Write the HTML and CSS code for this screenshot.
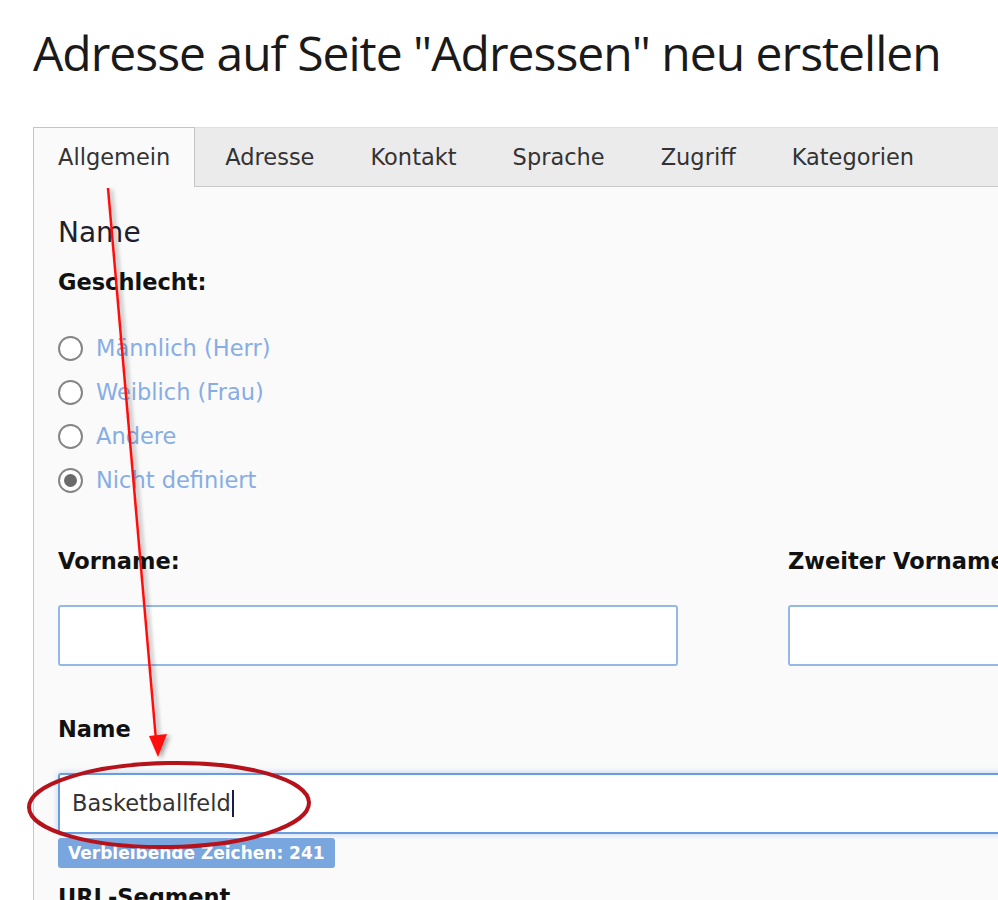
FILE: index.html
```html
<!DOCTYPE html>
<html lang="de">
<head>
<meta charset="utf-8">
<title>Adresse neu erstellen</title>
<link rel="stylesheet" href="styles.css">
</head>
<body>
<div class="page">
  <h1 class="title">Adresse auf Seite "Adressen" neu erstellen</h1>
  <div class="tabs">
    <ul class="tab-list">
      <li class="tab active">Allgemein</li>
      <li class="tab">Adresse</li>
      <li class="tab">Kontakt</li>
      <li class="tab">Sprache</li>
      <li class="tab">Zugriff</li>
      <li class="tab">Kategorien</li>
    </ul>
    <div class="panel">
      <h2 class="section-title">Name</h2>
      <div class="label">Geschlecht:</div>
      <div class="radios">
        <div class="radio-row"><span class="radio"></span><span class="radio-label">Männlich (Herr)</span></div>
        <div class="radio-row"><span class="radio"></span><span class="radio-label">Weiblich (Frau)</span></div>
        <div class="radio-row"><span class="radio"></span><span class="radio-label">Andere</span></div>
        <div class="radio-row"><span class="radio checked"></span><span class="radio-label">Nicht definiert</span></div>
      </div>
      <div class="two-cols">
        <div class="col">
          <div class="label">Vorname:</div>
          <div class="field"></div>
        </div>
        <div class="col">
          <div class="label">Zweiter Vorname:</div>
          <div class="field"></div>
        </div>
      </div>
      <div class="label name-label">Name</div>
      <div class="field focused">Basketballfeld<span class="caret"></span></div>
      <div class="badge">Verbleibende Zeichen: 241</div>
      <div class="label url-label">URL-Segment</div>
    </div>
  </div>
  <svg class="annotation" width="998" height="900" viewBox="0 0 998 900">
    <defs>
      <filter id="shadow" x="-50%" y="-10%" width="200%" height="120%">
        <feDropShadow dx="3" dy="2" stdDeviation="2" flood-color="#000" flood-opacity="0.35"/>
      </filter>
    </defs>
    <g filter="url(#shadow)">
      <line x1="108" y1="188" x2="156" y2="740" stroke="#ff1010" stroke-width="2.5"/>
      <polygon points="149,736 167,734 158,757" fill="#ff1010"/>
    </g>
    <ellipse cx="169" cy="805" rx="140" ry="42" fill="none" stroke="#b5121b" stroke-width="4" transform="rotate(-1 169 805)"/>
  </svg>
</div>
</body>
</html>
```

FILE: styles.css
```css
html, body {
  margin: 0;
  padding: 0;
  background: #ffffff;
  overflow: hidden;
}

.page {
  position: relative;
  width: 1500px;
  height: 900px;
  padding-left: 33px;
  font-family: "DejaVu Sans", Verdana, sans-serif;
  color: #222;
}

.title {
  margin: 0;
  padding-top: 23px;
  height: 127px;
  box-sizing: border-box;
  font-family: "Open Sans", "Noto Sans", sans-serif;
  font-weight: 400;
  font-size: 48px;
  letter-spacing: -1px;
  line-height: 60px;
  color: #1a1a1a;
}

.tabs {
  width: 1400px;
}

.tab-list {
  list-style: none;
  margin: 0;
  padding: 0;
  display: flex;
  gap: 4px;
  height: 60px;
  box-sizing: border-box;
  background: #ebebeb;
  border-top: 1px solid #e0e0e0;
  border-bottom: 1px solid #c8c8c8;
}

.tab {
  padding: 0 25px;
  border: 1px solid transparent;
  border-bottom: none;
  font-size: 22.5px;
  line-height: 57px;
  color: #333;
}

.tab.active {
  padding: 0 24px;
  background: #fafafa;
  border-color: #c4c4c4;
  margin-top: -1px;
  margin-bottom: -1px;
  line-height: 59px;
}

.panel {
  background: #fafafa;
  border-left: 1px solid #c8c8c8;
  padding: 29px 24px 40px 24px;
  height: 800px;
}

.section-title {
  margin: 0 0 18px 0;
  font-weight: 400;
  font-size: 28px;
  line-height: 34px;
  color: #1f1f2e;
}

.label {
  font-weight: 700;
  font-size: 22.5px;
  line-height: 28px;
  color: #111;
}

.radios {
  margin-top: 30px;
  display: flex;
  flex-direction: column;
}

.radio-row {
  height: 44px;
  display: flex;
  align-items: center;
  gap: 13px;
}

.radio {
  width: 25px;
  height: 25px;
  box-sizing: border-box;
  border: 2px solid #858585;
  border-radius: 50%;
  background: #fff;
  display: flex;
  align-items: center;
  justify-content: center;
  flex: none;
}

.radio.checked::after {
  content: "";
  width: 13px;
  height: 13px;
  border-radius: 50%;
  background: #6a6a6a;
}

.radio-label {
  font-size: 22.5px;
  color: #86ade4;
}

.two-cols {
  margin-top: 45px;
  display: grid;
  grid-template-columns: 620px 620px;
  column-gap: 110px;
}

.field {
  margin-top: 30px;
  height: 61px;
  box-sizing: border-box;
  border: 2px solid #94b9e6;
  border-radius: 3px;
  background: #fff;
  padding: 0 12px;
  font-size: 22.5px;
  line-height: 57px;
  color: #333;
  display: flex;
  align-items: center;
}

.field.focused {
  border-color: #6a9de0;
  box-shadow: 0 0 6px rgba(106, 157, 224, 0.45);
  width: 1352px;
}

.caret {
  display: inline-block;
  width: 2px;
  height: 27px;
  background: #1b1b4a;
  margin-left: 1px;
}

.name-label {
  margin-top: 49px;
}

.badge {
  margin-top: 4px;
  display: inline-block;
  height: 30px;
  padding: 0 10px;
  box-sizing: border-box;
  background: #79a6de;
  border-radius: 3px;
  color: #fff;
  font-weight: 700;
  font-size: 17px;
  line-height: 30px;
}

.url-label {
  margin-top: 15px;
}

.annotation {
  position: absolute;
  left: 0;
  top: 0;
  pointer-events: none;
}
```
